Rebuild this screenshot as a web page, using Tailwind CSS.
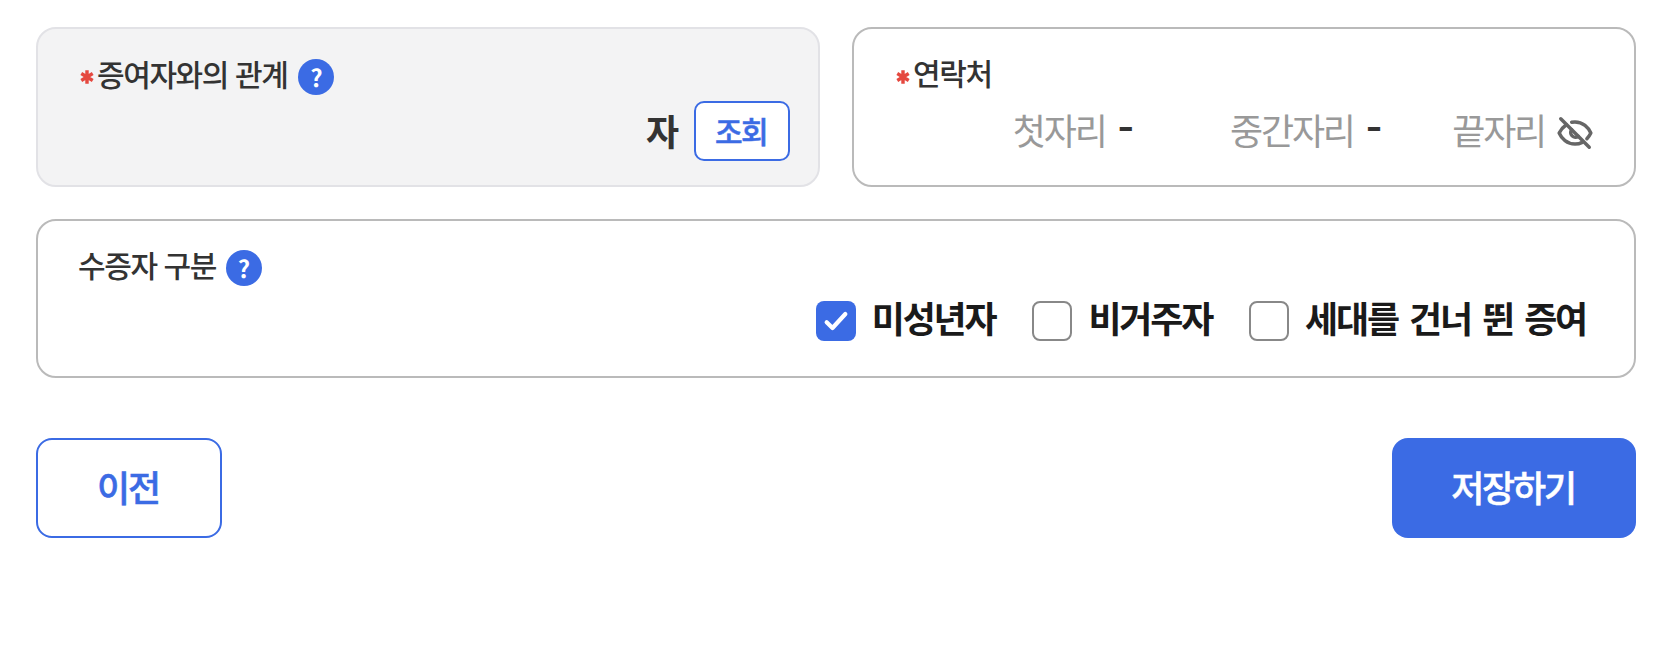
<!DOCTYPE html>
<html lang="ko">
<head>
    <meta charset="UTF-8">
    <title>증여 정보 입력</title>
    <script src="https://cdn.jsdelivr.net/npm/@tailwindcss/browser@4"></script>
</head>
<body class="bg-white font-['Noto_Sans_CJK_KR',sans-serif] text-[#333]">
    <main class="w-[1636px] pl-9 pt-[27px]">
        <div class="grid grid-cols-2 gap-8">
            <!-- 증여자와의 관계 -->
            <section class="h-[160px] rounded-[20px] border-2 border-[#e2e2e6] bg-[#f3f3f4] pl-[41px] pr-[28px] pt-[30px]">
                <div class="flex h-9 items-center">
                    <svg class="mr-[2px] size-[16px]" viewBox="0 0 14 14" fill="none" stroke="#e5483f" stroke-width="3"><path d="M7 1v12M2 4l10 6M12 4L2 10"/></svg>
                    <span class="pb-[9px] text-[30px] leading-none font-medium tracking-[-1.4px]">증여자와의 관계</span>
                    <span class="ml-[11px] flex size-9 items-center justify-center rounded-full bg-[#3b6be4] text-[24px] font-bold text-white">?</span>
                </div>
                <div class="mt-[6px] flex items-center justify-end">
                    <span class="pb-[2px] text-[36px] leading-none font-bold tracking-[-2px]">자</span>
                    <button class="ml-[17px] h-[60px] w-[96px] rounded-[10px] border-2 border-[#3b6be4] bg-white pb-[2px] pr-[2px] text-[30px] font-medium tracking-[-1.5px] text-[#3b6be4] [-webkit-text-stroke:0.5px_#3b6be4]">조회</button>
                </div>
            </section>

            <!-- 연락처 -->
            <section class="h-[160px] rounded-[20px] border-2 border-[#bababa] bg-white pl-[41px] pr-[40px] pt-[30px]">
                <div class="flex h-9 items-center">
                    <svg class="mr-[2px] size-[16px]" viewBox="0 0 14 14" fill="none" stroke="#e5483f" stroke-width="3"><path d="M7 1v12M2 4l10 6M12 4L2 10"/></svg>
                    <span class="pb-[11px] text-[30px] leading-none font-medium tracking-[-1.4px]">연락처</span>
                </div>
                <div class="mt-[7px] flex h-[60px] items-center justify-end text-[36px] leading-none tracking-[-2.2px] text-[#999]">
                    <span class="pb-[6px]">첫자리</span>
                    <span class="ml-[12px] pb-[10px] text-[46px] font-medium tracking-normal text-[#333]">-</span>
                    <span class="ml-[96px] pb-[6px]">중간자리</span>
                    <span class="ml-[12px] pb-[10px] text-[46px] font-medium tracking-normal text-[#333]">-</span>
                    <span class="ml-[70px] pb-[6px]">끝자리</span>
                    <svg class="ml-[11px] mt-[2px] size-[38px]" viewBox="0 0 24 24" fill="none" stroke="#666" stroke-width="2.2" stroke-linecap="round" stroke-linejoin="round">
                        <path d="M3 3l18 18"/>
                        <path d="M9.9 5.2A10 10 0 0 1 12 5c5 0 8.5 3.5 10 7a14 14 0 0 1-2.5 3.6"/>
                        <path d="M6.5 6.8A14 14 0 0 0 2 12c1.5 3.5 5 7 10 7a10 10 0 0 0 4.6-1.1"/>
                        <path d="M9.9 9.9a3 3 0 0 0 4.2 4.2"/>
                    </svg>
                </div>
            </section>
        </div>

        <!-- 수증자 구분 -->
        <section class="mt-8 h-[159px] rounded-[20px] border-2 border-[#bababa] bg-white pl-[40px] pr-[48px] pt-[29px]">
            <div class="flex h-9 items-center">
                <span class="pb-[9px] text-[30px] leading-none font-medium tracking-[-1.4px]">수증자 구분</span>
                <span class="ml-[10px] flex size-9 items-center justify-center rounded-full bg-[#3b6be4] text-[24px] font-bold text-white">?</span>
            </div>
            <div class="mt-[15px] flex h-10 items-center justify-end text-[36px] leading-none font-bold tracking-[-2.2px] text-[#1a1a1a]">
                <span class="flex size-10 items-center justify-center rounded-[8px] bg-[#3b6be4]">
                    <svg class="size-7" viewBox="0 0 24 24" fill="none" stroke="#fff" stroke-width="3.6" stroke-linecap="round" stroke-linejoin="round"><path d="M4 13l5 5L20 6"/></svg>
                </span>
                <span class="ml-4 pb-[8px]">미성년자</span>
                <span class="ml-[37px] size-10 rounded-[8px] border-2 border-[#888]"></span>
                <span class="ml-4 pb-[8px]">비거주자</span>
                <span class="ml-[37px] size-10 rounded-[8px] border-2 border-[#888]"></span>
                <span class="ml-4 pb-[8px] [word-spacing:3.3px]">세대를 건너 뛴 증여</span>
            </div>
        </section>

        <div class="mt-[60px] flex justify-between">
            <button class="h-[100px] w-[186px] rounded-[16px] border-2 border-[#3b6be4] bg-white pb-1 pr-[2px] text-[36px] font-medium tracking-[-2.2px] text-[#3b6be4] [-webkit-text-stroke:0.5px_#3b6be4]">이전</button>
            <button class="h-[100px] w-[244px] rounded-[16px] bg-[#3b6be4] pb-1 pr-[2px] text-[36px] font-medium tracking-[-2.2px] text-white [-webkit-text-stroke:0.5px_#fff]">저장하기</button>
        </div>
    </main>
</body>
</html>
